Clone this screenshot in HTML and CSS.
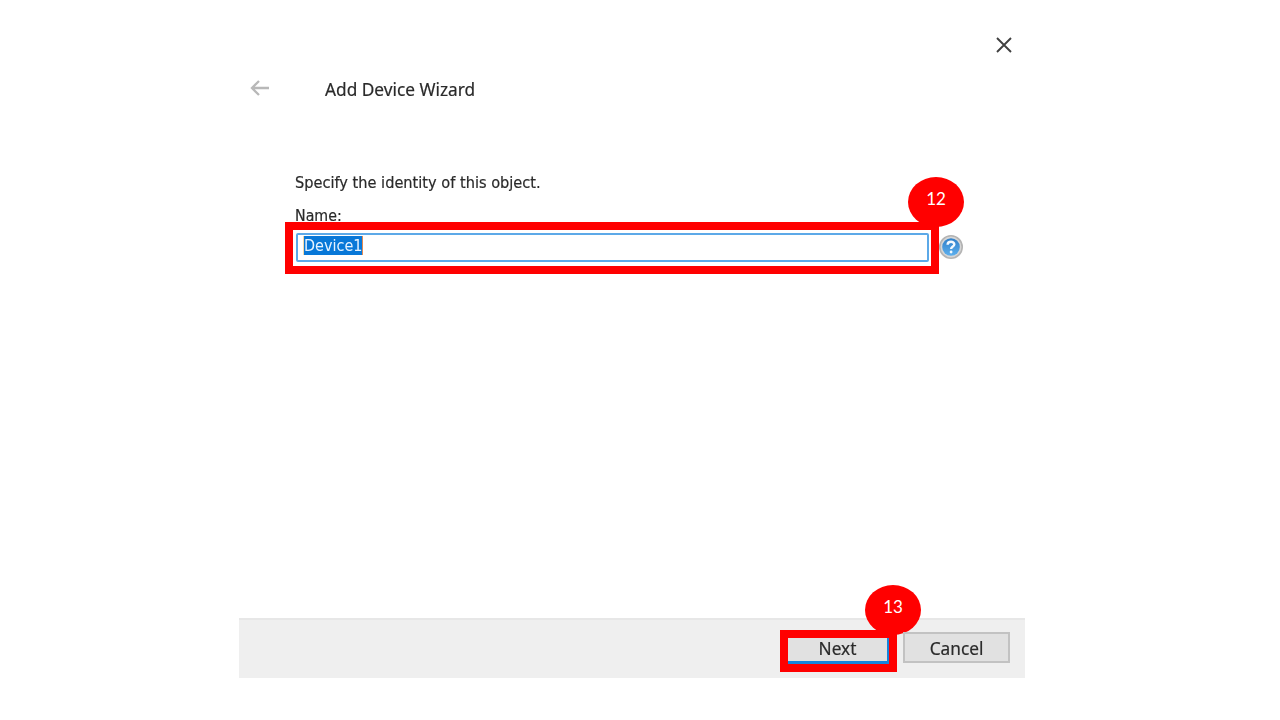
FILE: index.html
```html
<!DOCTYPE html>
<html lang="en">
<head>
<meta charset="utf-8">
<title>Add Device Wizard</title>
<link rel="stylesheet" href="styles.css">
</head>
<body>
<main class="dialog">
  <div class="titlebar">
    <svg class="close soft" width="18" height="18" viewBox="0 0 18 18"><path d="M2 2L16 16M16 2L2 16"/></svg>
  </div>
  <header class="header">
    <svg class="back soft" width="20" height="18" viewBox="0 0 20 18"><path d="M19 9H2M9 2L2 9L9 16"/></svg>
    <h1 class="title soft">Add Device Wizard</h1>
  </header>
  <section class="content">
    <p class="text intro soft">Specify the identity of this object.</p>
    <label class="text label soft">Name:</label>
    <div class="field-row">
      <div class="highlight field-highlight">
        <div class="input soft"><span class="selection">Device1</span></div>
        <span class="step step-name">12</span>
      </div>
      <svg class="help soft" width="26" height="26" viewBox="0 0 26 26">
        <defs><linearGradient id="blue" x1="0" y1="0" x2="0" y2="1"><stop offset="0" stop-color="#2f7fc9"/><stop offset="1" stop-color="#5db0ee"/></linearGradient></defs>
        <circle cx="13" cy="13" r="11.2" fill="#d6d6d6" stroke="#b4b4b4" stroke-width="1.6"/>
        <circle cx="13" cy="13" r="8.8" fill="url(#blue)"/>
        <path d="M9.6 10.7C9.7 6.8 16.4 6.9 16.3 10.5C16.2 12.6 13.1 12.6 13.1 15.1" fill="none" stroke="#f4faff" stroke-width="2.4"/>
        <circle cx="13.1" cy="18" r="1.4" fill="#f4faff"/>
      </svg>
    </div>
  </section>
  <footer class="footer">
    <div class="highlight next-highlight">
      <div class="button next"><span class="button-text soft">Next</span></div>
      <span class="step step-next">13</span>
    </div>
    <div class="button cancel soft"><span class="button-text">Cancel</span></div>
  </footer>
</main>
</body>
</html>
```
FILE: styles.css
```css
* { box-sizing: border-box; }
body { margin: 0; background: #fff; overflow: hidden; }
.dialog {
  width: 786px;
  height: 678px;
  margin-left: 239px;
  display: flex;
  flex-direction: column;
  font-family: "Noto Sans", sans-serif;
  color: #2a2a2a;
}
.soft { filter: blur(0.5px); }
.titlebar { height: 76px; display: flex; justify-content: flex-end; padding: 36px 12px 0 0; }
.close { fill: none; stroke: #404040; stroke-width: 1.9; }
.header { height: 96px; display: flex; align-items: flex-start; padding: 3px 0 0 11px; gap: 55px; }
.back { fill: none; stroke: #b8b8b8; stroke-width: 2.3; }
.title { margin: 0; font-size: 17.25px; line-height: 22px; font-weight: 400; white-space: nowrap; -webkit-text-stroke: 0.2px; }
.content { flex: 1; padding-left: 46px; display: flex; flex-direction: column; align-items: flex-start; }
.text { margin: 0 0 0 10px; font-family: "DejaVu Sans Condensed", "DejaVu Sans", sans-serif; font-stretch: condensed; font-size: 16.2px; line-height: 21px; white-space: nowrap; -webkit-text-stroke: 0.2px; }
.intro { height: 34px; }
.label { height: 16px; line-height: 20px; font-size: 15.8px; }
.field-row { display: flex; }
.highlight { position: relative; border: 8px solid #f00; }
.field-highlight { width: 654px; height: 52px; padding: 3px 2px 4px 3px; }
.input { height: 29px; border: 2px solid #5ca9e8; border-radius: 2px; padding: 1px 5px; display: flex; align-items: flex-start; }
.selection {
  height: 19px;
  width: 60px;
  background: #0878d8;
  border-right: 1px solid #e38a52;
  border-left: 1px solid #f3d9a8;
  color: #e6f3ff;
  font-family: "DejaVu Sans Condensed", "DejaVu Sans", sans-serif;
  font-stretch: condensed;
  font-size: 16px;
  line-height: 20px;
  white-space: nowrap;
}
.help { margin: 12px 0 0 -1px; }
.step {
  position: absolute;
  width: 56px;
  height: 50px;
  border-radius: 50%;
  background: #f00;
  color: #fff;
  font-family: Lato, sans-serif;
  font-size: 17px;
  line-height: 44px;
  text-align: center;
}
.step-name { left: 615px; top: -53px; }
.step-next { left: 77px; top: -53px; }
.footer { height: 60px; background: #efefef; border-top: 2px solid #e7e7e7; display: flex; padding: 10px 15px 0 541px; }
.next-highlight { width: 117px; height: 42px; }
.button { background: #e1e1e1; font-size: 17.25px; white-space: nowrap; text-align: center; -webkit-text-stroke: 0.2px; }
.step { -webkit-text-stroke: 0; }
.button-text { display: block; }
.next { height: 26px; border: solid #1684dc; border-width: 0 2px 3px 0; line-height: 22px; }
.cancel { width: 107px; height: 31px; margin: 2px 0 0 6px; border: 2px solid #c2c2c2; line-height: 30px; }
```
